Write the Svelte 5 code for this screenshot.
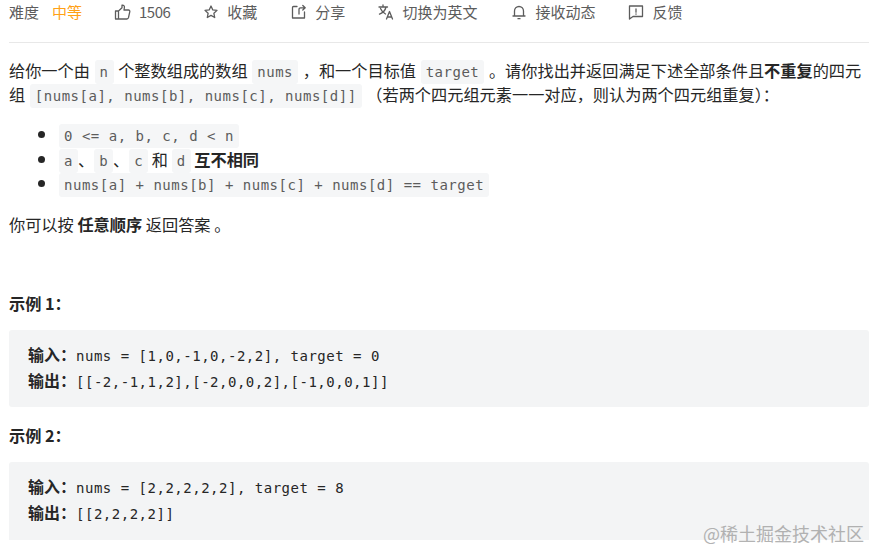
<script>
  const meta = [
    { icon: 'thumb', label: '1506' },
    { icon: 'star', label: '收藏' },
    { icon: 'share', label: '分享' },
    { icon: 'lang', label: '切换为英文' },
    { icon: 'bell', label: '接收动态' },
    { icon: 'note', label: '反馈' }
  ];
</script>

<div class="page">
  <div class="meta">
    <div class="level"><span>难度</span><span class="medium">中等</span></div>
    {#each meta as m}
      <div class="item {m.icon}">
        <svg width="18" height="18" viewBox="0 0 18 18" fill="none" stroke="#5c5c5c" stroke-width="1.3" stroke-linejoin="round" stroke-linecap="round">
          {#if m.icon === 'thumb'}
            <path d="M1.500 8h3v8h-3zM4.500 8L8 4.800V2.200c1.600-.4 2.600.8 2.400 2.300L10 7h4.500c1 0 1.500.8 1.300 1.700l-1.300 6c-.2.8-.8 1.300-1.600 1.300H4.500" />
          {:else if m.icon === 'star'}
            <path d="M9 3l1.800 3.900 4.200.5-3.100 2.900.8 4.200L9 12.400l-3.700 2.100.8-4.200L3 7.400l4.200-.5z" />
          {:else if m.icon === 'share'}
            <path d="M7 3.500H3.500c-.6 0-1 .4-1 1V15h12V9M9 11V6.500c0-1 .6-1.700 1.600-1.700h4.400M12.800 2.500L15.200 4.800 12.800 7" />
          {:else if m.icon === 'lang'}
            <path d="M2 4h8.500M6 2v2M9 4c-.7 3.200-3 5.800-6.500 7.200M3.500 5.500c1 2.500 3 4.500 5 5.500M9.500 16l3-7.500 3 7.500M10.500 14h4" />
          {:else if m.icon === 'bell'}
            <path d="M4.500 13V8c0-2.500 2-4.500 4.500-4.500s4.500 2 4.500 4.500v5zM3 13h12M8 15.700h2" />
          {:else}
            <path d="M2.500 3h13v10.500H6l-3.500 2.500z" /><path d="M9 6v3.200M9 10.800v.4" />
          {/if}
        </svg>
        <span class="label">{m.label}</span>
      </div>
    {/each}
  </div>

  <div class="content">
    <p class="intro">给你一个由 <code>n</code> 个整数组成的数组 <code>nums</code> ，和一个目标值 <code>target</code> 。请你找出并返回满足下述全部条件且<strong>不重复</strong>的四元组 <code>[nums[a], nums[b], nums[c], nums[d]]</code> （若两个四元组元素一一对应，则认为两个四元组重复）：</p>

    <ul>
      <li><code>0 &lt;= a, b, c, d &lt; n</code></li>
      <li><code>a</code>、<code>b</code>、<code>c</code> 和 <code>d</code> <strong>互不相同</strong></li>
      <li><code>nums[a] + nums[b] + nums[c] + nums[d] == target</code></li>
    </ul>

    <p class="any">你可以按 <strong>任意顺序</strong> 返回答案 。</p>

    <p class="title first"><strong>示例 1：</strong></p>
    <pre><strong>输入：</strong>nums = [1,0,-1,0,-2,2], target = 0
<strong>输出：</strong>[[-2,-1,1,2],[-2,0,0,2],[-1,0,0,1]]</pre>

    <p class="title"><strong>示例 2：</strong></p>
    <pre class="cut"><strong>输入：</strong>nums = [2,2,2,2,2], target = 8
<strong>输出：</strong>[[2,2,2,2]]</pre>
  </div>

  <div class="mark">@稀土掘金技术社区</div>
</div>

<style>
  :global(body) {
    background: #fff;
  }
  .page {
    position: relative;
    width: 870px;
    height: 549px;
    overflow: hidden;
    padding-left: 9px;
    box-sizing: border-box;
    font-family: "Noto Sans CJK SC", "Liberation Sans", sans-serif;
    color: #262626;
  }
  .meta {
    width: 860px;
    height: 41px;
    border-bottom: 1px solid #e8e8e8;
    display: flex;
    gap: 32px;
    padding-top: 1px;
    font-size: 15px;
    line-height: 22px;
    color: #5c5c5c;
    align-items: flex-start;
  }
  .level {
    display: flex;
    gap: 13px;
  }
  .medium {
    color: #ffa116;
  }
  .item {
    display: flex;
    align-items: center;
    gap: 7px;
  }
  .thumb .label {
    letter-spacing: -0.500px;
  }
  .share,
  .bell {
    margin-left: 1px;
  }
  .content {
    width: 860px;
    font-size: 16.200px;
    line-height: 24px;
  }
  p {
    margin: 0;
  }
  .intro {
    margin-top: 15px;
    word-spacing: 1px;
  }
  code {
    font-family: "DejaVu Sans Mono", "Noto Sans CJK SC", monospace;
    font-size: 14px;
    letter-spacing: 0.510px;
    word-spacing: 0;
    line-height: 1;
    background: #f5f6f7;
    color: #5c5c5c;
    padding: 4px 5px;
    border-radius: 3px;
  }
  strong {
    font-weight: 700;
  }
  ul {
    margin: 15px 0 0;
    padding-left: 50px;
    list-style: disc;
  }
  li {
    height: 24.500px;
    line-height: 24.500px;
  }
  li:nth-child(2) {
    line-height: 23.500px;
  }
  li::marker {
    font-size: 19px;
  }
  .any {
    margin-top: 17px;
  }
  .title {
    margin-top: 16px;
  }
  .title.first {
    margin-top: 55px;
  }
  pre {
    margin: 15px 0 0;
    background: #f3f4f5;
    border-radius: 3px;
    height: 77px;
    box-sizing: border-box;
    padding: 12px 19px 0;
    font-family: "DejaVu Sans Mono", "Noto Sans CJK SC", monospace;
    font-size: 14px;
    line-height: 24.500px;
    letter-spacing: 0.510px;
    color: #262626;
  }
  pre strong {
    font-family: "Noto Sans CJK SC", sans-serif;
    font-size: 16px;
    letter-spacing: 0;
  }
  pre.cut {
    border-radius: 3px 3px 0 0;
    height: 78px;
  }
  .mark {
    position: absolute;
    right: 6px;
    bottom: 4px;
    font-size: 18px;
    line-height: 24px;
    color: #a6a6a6;
    opacity: 0.85;
    font-family: "Noto Sans CJK SC", sans-serif;
  }
</style>
